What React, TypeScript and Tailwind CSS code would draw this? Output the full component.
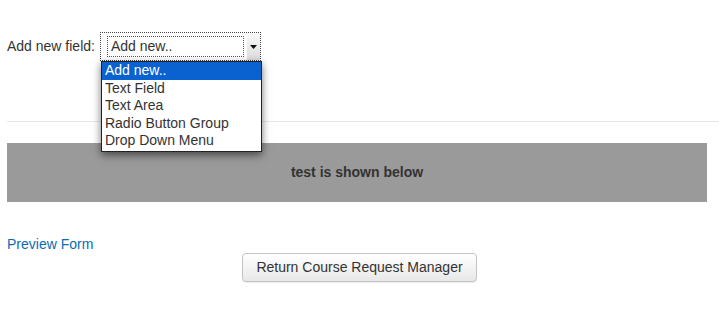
const options = ["Add new..", "Text Field", "Text Area", "Radio Button Group", "Drop Down Menu"];

function FakeSelect() {
  return (
    <div className="relative">
      <div className="flex h-[29px] w-[161px] items-stretch border border-dotted border-[#444] bg-white">
        <div className="flex flex-1 items-center p-[3px] pl-[6px]">
          <div className="flex h-[21px] w-full items-center border border-dotted border-[#555] pl-[3px] text-[14px] text-[#333]">
            Add new..
          </div>
        </div>
        <div className="flex w-[13px] items-center justify-center bg-gradient-to-b from-[#fafafa] to-[#dcdcdc]">
          <svg width="7" height="4" viewBox="0 0 7 4">
            <path d="M0 0 L7 0 L3.5 4 Z" fill="#111" />
          </svg>
        </div>
      </div>
      <ul className="absolute left-[1px] top-[29px] z-10 w-[161px] border border-[#222] bg-white pb-[1px] shadow-[0_3px_8px_rgba(0,0,0,0.55)]">
        {options.map((opt, i) => (
          <li
            key={opt}
            className={
              i === 0
                ? "h-[17.6px] bg-[#0a62d0] pl-[3px] text-[14px] leading-[17.6px] text-white"
                : "h-[17.6px] pl-[3px] text-[14px] leading-[17.6px] text-[#333]"
            }
          >
            {opt}
          </li>
        ))}
      </ul>
    </div>
  );
}

export default function App() {
  return (
    <div className="min-h-[318px] bg-white pl-[7px] pt-[32px] font-['Liberation_Sans',Arial,sans-serif] text-[#333]">
      <div className="flex items-center gap-[5px]">
        <span className="text-[14px]">Add new field:</span>
        <FakeSelect />
      </div>

      <div className="mt-[60px] border-t border-[#e8e8e8]" />

      <div className="mr-[12px] mt-[21px] flex h-[59px] items-center justify-center bg-[#9a9a9a]">
        <span className="text-[14px] font-bold text-[#333]">test is shown below</span>
      </div>

      <div className="mt-[33px] h-[18px] text-[14px] leading-[18px]">
        <a className="text-[#0b6cb3]">Preview Form</a>
      </div>

      <div className="flex justify-center pr-[7px]">
        <button className="h-[29px] rounded-[4px] border border-[#c4c4c4] bg-gradient-to-b from-white to-[#e8e8e8] px-[13px] text-[14px] text-[#333] shadow-[0_1px_1px_rgba(0,0,0,0.08)]">
          Return Course Request Manager
        </button>
      </div>
    </div>
  );
}
